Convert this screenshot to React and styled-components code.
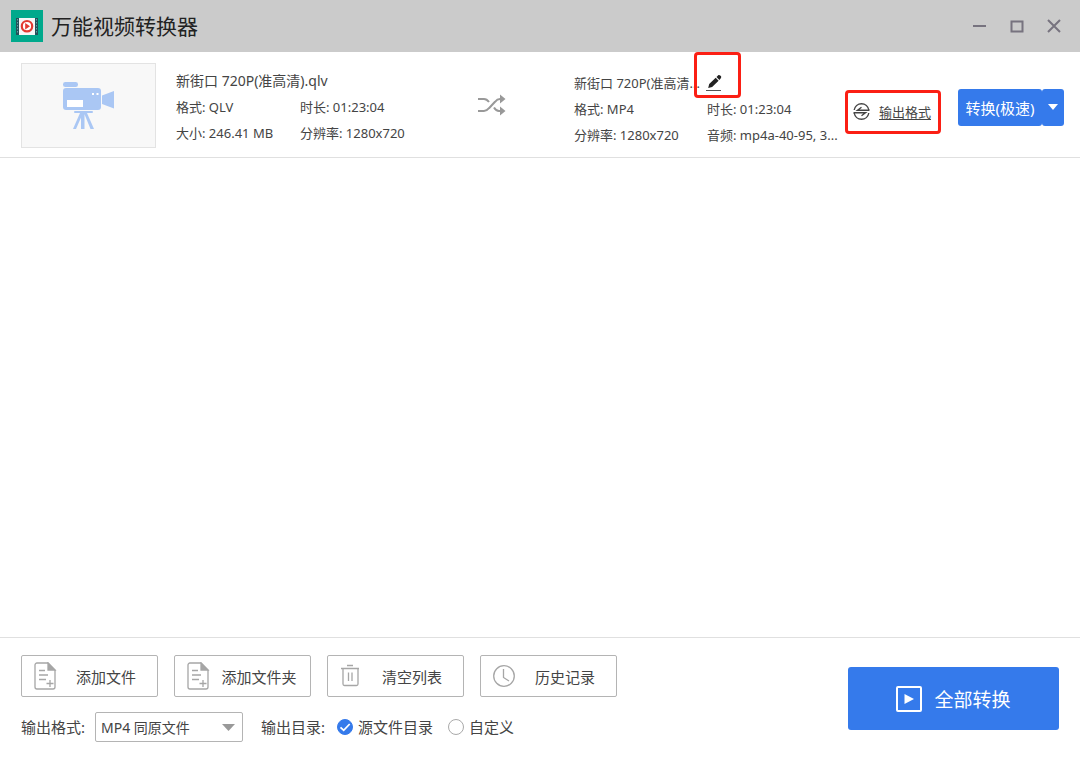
import React, { useState } from 'react';
import styled, { createGlobalStyle } from 'styled-components';

const GlobalStyle = createGlobalStyle`
  * {
    box-sizing: border-box;
  }

  body {
    margin: 0;
    background: #fff;
    color: #444;
    font-family: 'Noto Sans', 'Noto Sans CJK SC', sans-serif;
    font-size: 13px;
  }

  button,
  select,
  input {
    margin: 0;
    font-family: inherit;
    color: inherit;
  }

  svg {
    display: block;
    flex: none;
  }
`;

const Window = styled.div`
  display: flex;
  flex-direction: column;
  min-height: 100vh;
`;

const TitleBar = styled.header`
  display: flex;
  align-items: center;
  height: 52px;
  padding: 0 18px 0 11px;
  background: #cbcbcb;
`;

const Title = styled.h1`
  flex: 1;
  margin: 0 0 0 8px;
  font-size: 21px;
  line-height: 32px;
  font-weight: 400;
  color: #222;
`;

const WindowControls = styled.div`
  display: flex;
  gap: 21px;
`;

const WindowButton = styled.button`
  padding: 0;
  border: none;
  background: none;
  color: #77737f;
`;

const FileList = styled.main`
  flex: 1;
`;

const FileRow = styled.section`
  display: grid;
  grid-template-columns: 135px minmax(250px, 1fr) 30px 338px 96px 123px;
  align-items: center;
  padding: 11px 16px 9px 21px;
  border-bottom: 1px solid #e0e0e0;
`;

const Thumbnail = styled.div`
  display: flex;
  align-items: center;
  justify-content: center;
  height: 85px;
  border: 1px solid #e3e3e3;
  background: #f8f8f8;
`;

const Info = styled.div`
  display: grid;
  align-self: start;
  grid-template-columns: ${({ $columns }) => $columns};
  line-height: 26px;
  white-space: nowrap;
`;

const SourceInfo = styled(Info)`
  padding: 5px 0 0 20px;
`;

const TargetInfo = styled(Info)`
  padding: 7px 0 0 67px;
`;

const FileName = styled.div`
  display: flex;
  grid-column: 1 / -1;
  font-size: ${({ $size }) => $size}px;
`;

const EditButton = styled.button`
  position: relative;
  margin-left: 6px;
  padding: 0;
  border: none;
  background: none;

  &::after {
    content: '';
    position: absolute;
    inset: -18px -19px -2px -12px;
    border: 3px solid #fb1f14;
    border-radius: 4px;
  }
`;

const FormatButton = styled.button`
  display: flex;
  align-items: center;
  gap: 9px;
  height: 44px;
  margin-top: 12px;
  padding: 0 5px;
  border: 3px solid #fb1f14;
  border-radius: 4px;
  background: none;
  font-size: 13px;
  line-height: 18px;
  white-space: nowrap;
  text-decoration: underline;
  text-underline-offset: 2px;
`;

const SplitButton = styled.div`
  display: flex;
  justify-self: end;
  height: 37px;
  margin-top: 3px;
`;

const ConvertButton = styled.button`
  width: 84px;
  padding: 0;
  border: none;
  border-radius: 3px;
  background: #357aeb;
  color: #fff;
  font-size: 15px;
  white-space: nowrap;
`;

const ConvertMenuButton = styled.button`
  display: flex;
  align-items: center;
  justify-content: center;
  width: 22px;
  padding: 0;
  border: none;
  border-radius: 3px;
  background: #357aeb;
  color: #fff;
`;

const Footer = styled.footer`
  display: flex;
  align-items: center;
  justify-content: space-between;
  padding: 17px 21px;
  border-top: 1px solid #e0e0e0;
`;

const FooterRow = styled.div`
  display: flex;
  align-items: center;
  gap: 16px;

  & + & {
    gap: 18px;
    margin-top: 15px;
  }
`;

const ToolButton = styled.button`
  display: flex;
  align-items: center;
  width: 137px;
  height: 42px;
  padding: 0 2px 0 11px;
  border: 1px solid #b4b4b4;
  border-radius: 2px;
  background: #fff;
  font-size: 15px;

  span {
    flex: 1;
    text-align: center;
  }
`;

const Field = styled.div`
  display: flex;
  align-items: center;
  font-size: 15px;
  line-height: 30px;
`;

const SelectBox = styled.div`
  position: relative;
  width: 148px;
  margin-left: 10px;

  svg {
    position: absolute;
    top: 12px;
    right: 8px;
    pointer-events: none;
  }
`;

const Select = styled.select`
  display: block;
  appearance: none;
  width: 100%;
  height: 30px;
  padding: 0 24px 0 5px;
  border: 1px solid #b4b4b4;
  border-radius: 2px;
  background: #fff;
  font-size: 14px;
`;

const RadioLabel = styled.label`
  display: flex;
  align-items: center;
  gap: 5px;
  margin-left: ${({ $first }) => ($first ? 12 : 15)}px;
`;

const RadioMark = styled.span`
  display: grid;
  place-items: center;

  & > * {
    grid-area: 1 / 1;
  }
`;

const Radio = styled.input`
  appearance: none;
  width: 16px;
  height: 16px;
  border: 1px solid #a9a9a9;
  border-radius: 50%;
  background: #fff;

  &:checked {
    border-color: #357aeb;
    background: #357aeb;
  }

  & + svg {
    pointer-events: none;
  }
`;

const ConvertAllButton = styled.button`
  display: flex;
  align-items: center;
  justify-content: center;
  gap: 12px;
  width: 211px;
  height: 63px;
  border: none;
  border-radius: 3px;
  background: #357aeb;
  color: #fff;
  font-size: 19px;
`;

const Logo = () => (
  <svg width="32" height="32" viewBox="0 0 32 32" aria-hidden="true">
    <rect width="32" height="32" fill="#00a98c" />
    <rect x="5" y="8" width="22" height="17" fill="#25505a" />
    <path d="M6.500 9v15M25.500 9v15" stroke="#5fa8a4" strokeWidth="1" strokeDasharray="1.500 1.500" />
    <rect x="8" y="8" width="16" height="17" fill="#f5f7f8" />
    <circle cx="16" cy="16.200" r="5.200" fill="#fff" stroke="#e23a32" strokeWidth="2.200" />
    <path d="M14.200 13l4.800 3.200-4.800 3.200z" fill="#e23a32" />
  </svg>
);

const CameraIcon = () => (
  <svg width="52" height="48" viewBox="0 0 52 48" fill="#aac7f4" aria-hidden="true">
    <rect x="0" y="0" width="15" height="5" rx="2.3" />
    <rect x="0" y="6" width="38" height="22" rx="3" />
    <path d="M39 13.500L51 9v17.500L39 22z" />
    <rect x="4" y="18" width="16" height="7" fill="#fff" />
    <rect x="29" y="11" width="2" height="2" fill="#fff" />
    <rect x="33.500" y="11" width="2" height="2" fill="#fff" />
    <rect x="11" y="29" width="19" height="2" rx="1" />
    <path d="M17 31h3l-7 16h-3zM21 31h3l7 16h-3.500zM18 31h3.500v16H18z" />
  </svg>
);

const ShuffleIcon = () => (
  <svg width="30" height="26" viewBox="0 0 30 26" fill="none" stroke="#999" strokeWidth="2" aria-hidden="true">
    <path d="M1 6h6c2 0 3.500 1 5 3M1 18h6c2 0 3.500-1 5-2.800L18 8.800C19.500 7 21 6 23 6h2M17 14.500c1.500 2.500 3 3.500 5 3.500h3" />
    <path d="M23 1.500L28.500 6 23 10.500zM23 13.500l5.500 4.500-5.500 4.500z" fill="#999" stroke="none" />
  </svg>
);

const PencilIcon = () => (
  <svg width="16" height="18" viewBox="0 0 16 18" aria-hidden="true">
    <path
      d="M2.200 14l1-3.900 6.500-6.300 2.900 2.900-6.500 6.300zM10.500 3l1.500-1.500c.7-.7 1.500-.6 2.200 0l.6.6c.6.7.6 1.500 0 2.100L13.400 5.900z"
      fill="#222"
    />
    <path d="M0 16.500h15" stroke="#555" />
  </svg>
);

const SwapIcon = () => (
  <svg width="17" height="17" viewBox="0 0 17 17" fill="none" stroke="#444" strokeWidth="1.4" aria-hidden="true">
    <path d="M1.200 7a7.400 7.400 0 0 1 14.600 0M1.200 10a7.400 7.400 0 0 0 14.600 0" />
    <path d="M16.500 7.300H4.500l4-3M.5 9.700h12l-4 3" />
  </svg>
);

const FileAddIcon = () => (
  <svg width="24" height="28" viewBox="0 0 24 28" fill="none" stroke="#a6a6a6" strokeWidth="1.300" aria-hidden="true">
    <path d="M15 1H4a2 2 0 0 0-2 2v22a2 2 0 0 0 2 2h16a2 2 0 0 0 2-2V8z" />
    <path d="M15 1v7h7z" fill="#a6a6a6" />
    <path d="M6 8.500h6M6 13h9M6 17.500h7M17 18v7M13.500 21.500h7" />
  </svg>
);

const TrashIcon = () => (
  <svg width="24" height="24" viewBox="0 0 24 24" fill="none" stroke="#a6a6a6" strokeWidth="1.300" aria-hidden="true">
    <path d="M8 1.500h6M2 4.500h18M4 4.500V20a1.500 1.500 0 0 0 1.500 1.500h12A1.500 1.500 0 0 0 19 20V4.500M9.500 8.500V17M13 8.500V17" />
  </svg>
);

const ClockIcon = () => (
  <svg width="24" height="24" viewBox="0 0 24 24" fill="none" stroke="#a6a6a6" strokeWidth="1.300" aria-hidden="true">
    <circle cx="12" cy="12" r="10.300" />
    <path d="M11.500 5v8.500l5.500 3.500" />
  </svg>
);

const Caret = ({ width, height, color }) => (
  <svg width={width} height={height} viewBox="0 0 12 6" preserveAspectRatio="none" aria-hidden="true">
    <path d="M0 0h12L6 6z" fill={color} />
  </svg>
);

const CheckIcon = () => (
  <svg width="16" height="16" viewBox="0 0 16 16" aria-hidden="true">
    <path d="M3.500 8.300l3.200 3 6-6.300" fill="none" stroke="#fff" strokeWidth="1.800" />
  </svg>
);

const PlayIcon = () => (
  <svg width="26" height="26" viewBox="0 0 26 26" aria-hidden="true">
    <rect x="1" y="1" width="24" height="24" rx="1" fill="none" stroke="#fff" strokeWidth="2" />
    <path d="M8.500 8l9.500 5-9.500 5z" fill="#fff" />
  </svg>
);

const windowActions = [
  { label: '最小化', path: 'M1 8h13' },
  { label: '最大化', path: 'M2.500 3.500h11v10h-11z' },
  { label: '关闭', path: 'M2 2l12 12M14 2L2 14' },
];

const tools = [
  { label: '添加文件', Icon: FileAddIcon },
  { label: '添加文件夹', Icon: FileAddIcon },
  { label: '清空列表', Icon: TrashIcon },
  { label: '历史记录', Icon: ClockIcon },
];

const directories = [
  { value: 'source', label: '源文件目录' },
  { value: 'custom', label: '自定义' },
];

const App = () => {
  const [directory, setDirectory] = useState('source');

  return (
    <Window>
      <GlobalStyle />
      <TitleBar>
        <Logo />
        <Title>万能视频转换器</Title>
        <WindowControls>
          {windowActions.map(({ label, path }) => (
            <WindowButton key={label} type="button" aria-label={label}>
              <svg width="16" height="16" viewBox="0 0 16 16" fill="none" stroke="currentColor" strokeWidth="2">
                <path d={path} />
              </svg>
            </WindowButton>
          ))}
        </WindowControls>
      </TitleBar>

      <FileList>
        <FileRow>
          <Thumbnail>
            <CameraIcon />
          </Thumbnail>
          <SourceInfo $columns="124px 1fr">
            <FileName $size={14}>新街口 720P(准高清).qlv</FileName>
            <span>格式: QLV</span>
            <span>时长: 01:23:04</span>
            <span>大小: 246.41 MB</span>
            <span>分辨率: 1280x720</span>
          </SourceInfo>
          <ShuffleIcon />
          <TargetInfo $columns="133px 1fr">
            <FileName $size={13}>
              新街口 720P(准高清...
              <EditButton type="button" aria-label="编辑文件名">
                <PencilIcon />
              </EditButton>
            </FileName>
            <span>格式: MP4</span>
            <span>时长: 01:23:04</span>
            <span>分辨率: 1280x720</span>
            <span>音频: mp4a-40-95, 3...</span>
          </TargetInfo>
          <FormatButton type="button">
            <SwapIcon />
            输出格式
          </FormatButton>
          <SplitButton>
            <ConvertButton type="button">转换(极速)</ConvertButton>
            <ConvertMenuButton type="button" aria-label="更多转换方式">
              <Caret width={10} height={6} color="#fff" />
            </ConvertMenuButton>
          </SplitButton>
        </FileRow>
      </FileList>

      <Footer>
        <div>
          <FooterRow>
            {tools.map(({ label, Icon }) => (
              <ToolButton key={label} type="button">
                <Icon />
                <span>{label}</span>
              </ToolButton>
            ))}
          </FooterRow>
          <FooterRow>
            <Field>
              <label htmlFor="format">输出格式:</label>
              <SelectBox>
                <Select id="format" defaultValue="mp4">
                  <option value="mp4">MP4 同原文件</option>
                </Select>
                <Caret width={13} height={7} color="#999" />
              </SelectBox>
            </Field>
            <Field role="radiogroup" aria-labelledby="directory">
              <span id="directory">输出目录:</span>
              {directories.map(({ value, label }, i) => (
                <RadioLabel key={value} $first={i === 0}>
                  <RadioMark>
                    <Radio
                      type="radio"
                      name="directory"
                      value={value}
                      checked={directory === value}
                      onChange={() => setDirectory(value)}
                    />
                    {directory === value && <CheckIcon />}
                  </RadioMark>
                  {label}
                </RadioLabel>
              ))}
            </Field>
          </FooterRow>
        </div>
        <ConvertAllButton type="button">
          <PlayIcon />
          全部转换
        </ConvertAllButton>
      </Footer>
    </Window>
  );
};

export default App;
